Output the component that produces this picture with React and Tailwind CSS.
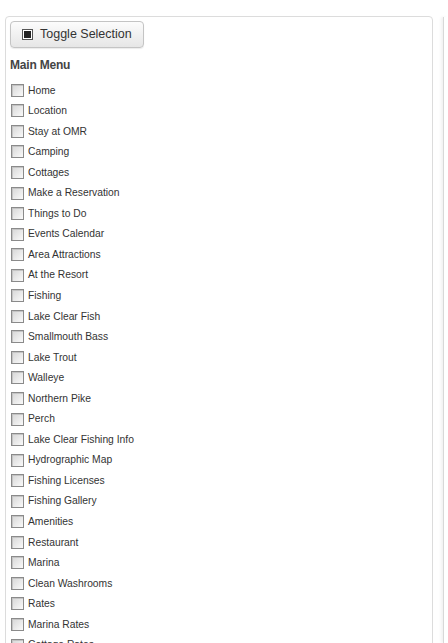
const items = [
  "Home",
  "Location",
  "Stay at OMR",
  "Camping",
  "Cottages",
  "Make a Reservation",
  "Things to Do",
  "Events Calendar",
  "Area Attractions",
  "At the Resort",
  "Fishing",
  "Lake Clear Fish",
  "Smallmouth Bass",
  "Lake Trout",
  "Walleye",
  "Northern Pike",
  "Perch",
  "Lake Clear Fishing Info",
  "Hydrographic Map",
  "Fishing Licenses",
  "Fishing Gallery",
  "Amenities",
  "Restaurant",
  "Marina",
  "Clean Washrooms",
  "Rates",
  "Marina Rates",
  "Cottage Rates",
];

function Box() {
  return (
    <span className="w-[13px] h-[13px] shrink-0 border border-[#8a8a8a] bg-gradient-to-br from-[#d6d6d6] to-[#fafafa] shadow-[inset_1px_1px_0_#c4c4c4]" />
  );
}

export default function App() {
  return (
    <div className="h-[643px] overflow-hidden bg-white flex font-['Liberation_Sans',Arial,sans-serif] text-[#333]">
      <div className="ml-[5px] mt-[16px] w-[428px] shrink-0 border border-[#dcdcdc] rounded-[4px] pt-[4px] px-[4px] h-[700px]">
        <button className="flex items-center gap-[7px] h-[27px] pl-[11px] pr-[11px] rounded-[4px] border border-[#c4c4c4] bg-gradient-to-b from-[#fcfcfc] to-[#e6e6e6] text-[12.5px] text-[#333] shadow-[0_1px_1px_rgba(0,0,0,0.08)]">
          <span className="w-[11px] h-[11px] border border-[#555] bg-white flex items-center justify-center">
            <span className="w-[7px] h-[7px] bg-[#222]" />
          </span>
          Toggle Selection
        </button>

        <h3 className="mt-[8px] text-[12px] font-bold text-[#444] tracking-[-0.2px]">Main Menu</h3>

        <ul className="mt-[6px] ml-[1px]">
          {items.map((it) => (
            <li key={it} className="flex items-center gap-[4px] h-[20.55px] text-[10.3px]">
              <Box />
              <span>{it}</span>
            </li>
          ))}
        </ul>
      </div>
      <div className="ml-[10px] mt-[17px] flex-1 border-l border-[#d8d8d8] shadow-[-2px_0_3px_rgba(0,0,0,0.06)]" />
    </div>
  );
}
